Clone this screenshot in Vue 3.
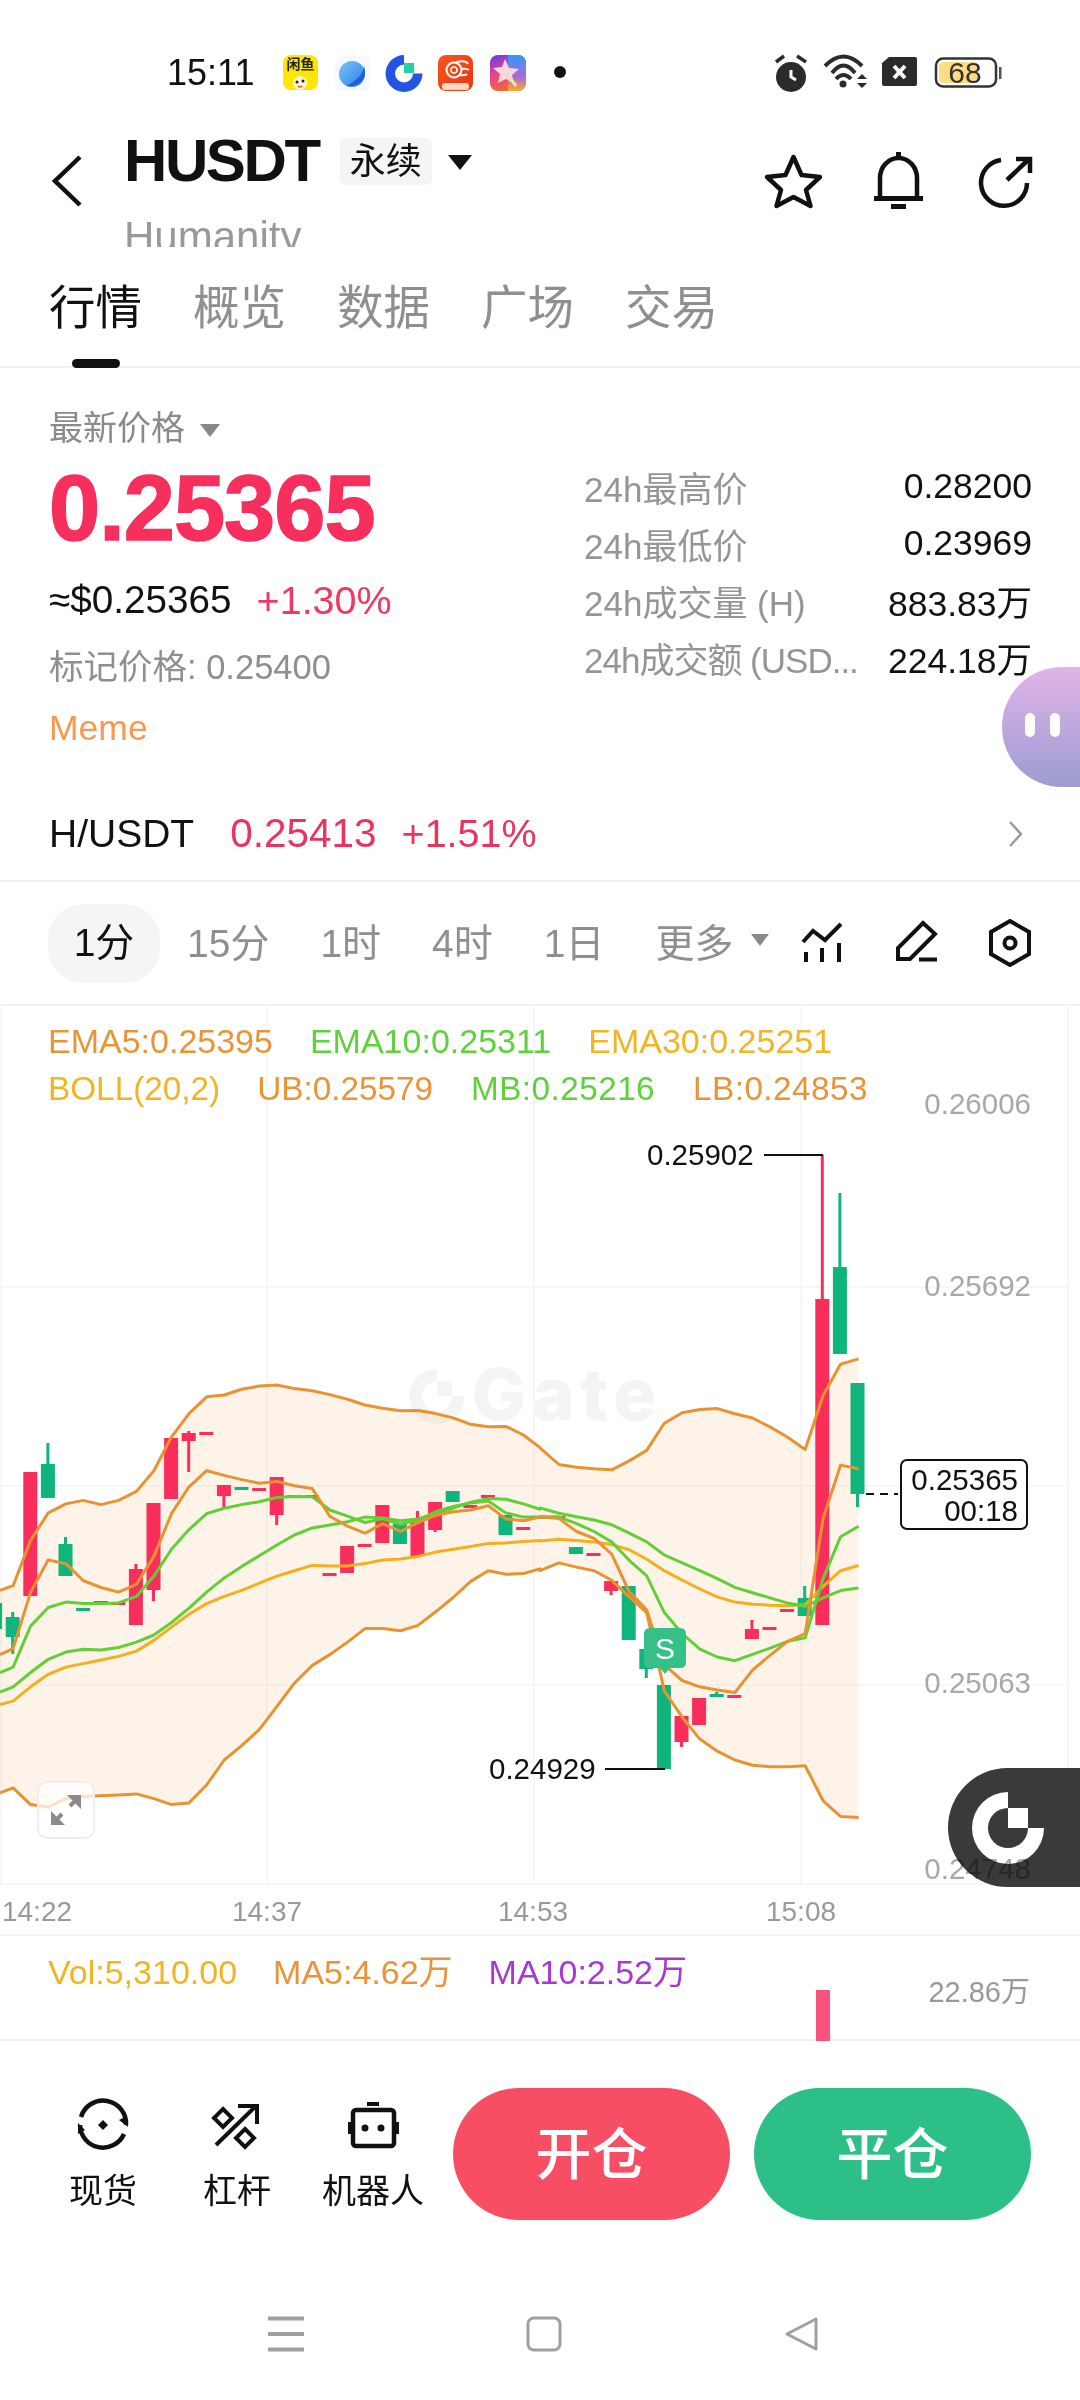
<script setup>
const tabs = ['行情', '概览', '数据', '广场', '交易']
const stats = [
  ['24h最高价', '0.28200'],
  ['24h最低价', '0.23969'],
  ['24h成交量 (H)', '883.83万'],
  ['24h成交额 (USD...', '224.18万'],
]
const periods = ['15分', '1时', '4时', '1日']

const X = (i) => 12.7 + 17.6 * i
const UP = '#f92e5a'
const DN = '#0fb57c'
// [index, colour, wickTop, bodyTop, bodyBottom, wickBottom]
const raw = [
  [-1, DN, 1603, 1603, 1629, 1629], [0, DN, 1612, 1617, 1637, 1654], [1, UP, 1472, 1472, 1596, 1596],
  [2, DN, 1443, 1464, 1498, 1498], [3, DN, 1537, 1544, 1576, 1576], [4, DN, 1608, 1608, 1611, 1611],
  [5, UP, 1601, 1601, 1604, 1604], [6, UP, 1602, 1602, 1605, 1605], [7, UP, 1564, 1569, 1625, 1625],
  [8, UP, 1503, 1503, 1590, 1601], [9, UP, 1438, 1438, 1499, 1499], [10, UP, 1431, 1433, 1441, 1472],
  [11, UP, 1432, 1432, 1435, 1435], [12, UP, 1485, 1485, 1496, 1508], [13, DN, 1487, 1487, 1490, 1490],
  [14, UP, 1488, 1488, 1491, 1491], [15, UP, 1477, 1477, 1515, 1525], [16, UP, 1495, 1495, 1498, 1498],
  [17, UP, 1495, 1495, 1498, 1498], [18, UP, 1573, 1573, 1576, 1576], [19, UP, 1546, 1546, 1573, 1573],
  [20, UP, 1544, 1544, 1547, 1547], [21, UP, 1505, 1505, 1543, 1543], [22, DN, 1524, 1524, 1544, 1544],
  [23, UP, 1511, 1519, 1556, 1556], [24, UP, 1502, 1502, 1530, 1532], [25, DN, 1491, 1491, 1502, 1502],
  [26, UP, 1505, 1505, 1508, 1508], [27, UP, 1495, 1495, 1498, 1498], [28, DN, 1515, 1515, 1535, 1535],
  [29, UP, 1527, 1527, 1530, 1530], [30, DN, 1516, 1516, 1519, 1519], [31, UP, 1516, 1516, 1519, 1519],
  [32, DN, 1547, 1547, 1554, 1554], [33, UP, 1553, 1553, 1556, 1556], [34, UP, 1581, 1581, 1591, 1595],
  [35, DN, 1586, 1586, 1640, 1640], [36, DN, 1649, 1649, 1669, 1678], [37, DN, 1685, 1685, 1769, 1769],
  [38, UP, 1716, 1716, 1742, 1747], [39, UP, 1698, 1698, 1725, 1725], [40, DN, 1692, 1694, 1697, 1697],
  [41, UP, 1695, 1695, 1698, 1698], [42, UP, 1620, 1629, 1639, 1639], [43, UP, 1627, 1627, 1630, 1630],
  [44, UP, 1609, 1609, 1612, 1612], [45, DN, 1586, 1598, 1616, 1616], [46, UP, 1155, 1299, 1625, 1625],
  [47, DN, 1193, 1267, 1354, 1354], [48, DN, 1383, 1383, 1494, 1507],
]
const candles = raw.map(([i, color, wt, bt, bb, wb]) => ({ i, color, x: X(i), wt, bt, bb, wb }))

const a = (p) => p.map(([x, y]) => [x / 2.904, y / 2.8 + 1360])
const b = (p) => p.map(([x, y]) => [x / 2.904 + 540, y / 1.912 + 1100])
const str = (p) => p.map(([x, y]) => `${x.toFixed(1)},${y.toFixed(1)}`).join(' ')

const upper = [...a([[0,645],[38,632],[89,505],[140,428],[191,403],[242,393],[293,405],[344,393],[396,368],[447,310],[498,215],[549,150],[600,103],[651,98],[702,82],[753,73],[804,70],[855,80],[907,86],[958,97],[1009,110],[1060,126],[1111,135],[1163,142],[1214,141],[1265,150],[1316,162],[1367,180],[1418,187],[1469,186],[1520,210],[1568,245]]),
  ...b([[0,665],[55,697],[106,702],[157,705],[208,707],[259,690],[310,670],[361,618],[413,598],[464,592],[515,590],[566,600],[617,608],[668,625],[719,645],[770,668],[822,565],[873,505],[925,495]])]
const lower = [...a([[0,1212],[38,1198],[89,1245],[140,1252],[191,1228],[242,1222],[293,1220],[344,1218],[396,1215],[447,1228],[498,1245],[549,1240],[600,1190],[651,1120],[702,1080],[753,1035],[804,970],[855,905],[907,855],[958,825],[1009,790],[1060,752],[1111,752],[1163,758],[1214,743],[1265,705],[1316,665],[1367,620],[1418,590],[1469,600],[1520,598],[1568,585]]),
  ...b([[0,900],[55,885],[106,893],[157,900],[208,918],[259,950],[310,980],[361,1130],[413,1180],[464,1222],[515,1245],[566,1262],[617,1272],[668,1275],[719,1275],[770,1273],[822,1340],[873,1370],[925,1372]])]
const ema5 = [...a([[0,825],[38,808],[89,650],[140,560],[191,570],[242,618],[293,637],[344,650],[396,628],[447,550],[498,430],[549,355],[600,310],[651,323],[702,335],[753,345],[804,340],[855,352],[907,360],[958,438],[1009,465],[1060,485],[1111,458],[1163,480],[1214,455],[1265,435],[1316,425],[1367,420],[1418,408],[1469,445],[1520,450],[1568,440]]),
  ...b([[0,797],[55,800],[106,825],[157,838],[208,868],[259,940],[310,975],[361,1080],[413,1110],[464,1122],[515,1128],[566,1133],[617,1090],[668,1062],[719,1035],[770,1020],[822,800],[873,698],[925,705]])]
const ema10 = [...a([[0,875],[38,860],[89,745],[140,693],[191,678],[242,682],[293,682],[344,680],[396,662],[447,605],[498,530],[549,475],[600,430],[651,415],[702,405],[753,397],[804,385],[855,382],[907,383],[958,420],[1009,437],[1060,455],[1111,445],[1163,460],[1214,448],[1265,425],[1316,410],[1367,400],[1418,395],[1469,428],[1520,440],[1568,440]]),
  ...b([[0,797],[55,797],[106,810],[157,825],[208,845],[259,880],[310,910],[361,980],[413,1020],[464,1050],[515,1065],[566,1072],[617,1060],[668,1048],[719,1035],[770,1028],[822,915],[873,835],[925,815]])]
const mb = [...a([[0,930],[38,915],[89,875],[140,838],[191,818],[242,810],[293,812],[344,805],[396,790],[447,770],[498,735],[549,695],[600,650],[651,610],[702,578],[753,548],[804,518],[855,490],[907,470],[958,462],[1009,453],[1060,440],[1111,442],[1163,450],[1214,445],[1265,430],[1316,415],[1367,398],[1418,388],[1469,390],[1520,403],[1568,418]]),
  ...b([[0,780],[55,790],[106,797],[157,803],[208,812],[259,828],[310,845],[361,870],[413,885],[464,900],[515,915],[566,932],[617,942],[668,952],[719,962],[770,968],[822,952],[873,938],[925,933]])]
const ema30 = [...a([[0,965],[38,955],[89,915],[140,880],[191,860],[242,850],[293,840],[344,830],[396,815],[447,785],[498,748],[549,712],[600,682],[651,662],[702,645],[753,625],[804,605],[855,590],[907,575],[958,577],[1009,577],[1060,570],[1111,560],[1163,557],[1214,550],[1265,538],[1316,530],[1367,522],[1418,514],[1469,512],[1520,508],[1568,505]]),
  ...b([[0,843],[55,840],[106,842],[157,845],[208,850],[259,860],[310,878],[361,900],[413,918],[464,935],[515,950],[566,960],[617,964],[668,966],[719,967],[770,965],[822,930],[873,900],[925,890]])]

const bandFill = str([...upper, ...[...lower].reverse()])
const series = [
  { p: str(upper), c: '#e8932f' }, { p: str(lower), c: '#e8932f' }, { p: str(ema30), c: '#f2b01e' },
  { p: str(mb), c: '#62cf35' }, { p: str(ema10), c: '#62cf35' }, { p: str(ema5), c: '#e8932f' },
]
const hGrid = [1287, 1486, 1685, 1884]
const vGrid = [1, 267, 534, 801, 1068]
const yLabels = [['0.26006', 1104], ['0.25692', 1286], ['0.25063', 1683]]
const tLabels = [['14:22', 37], ['14:37', 267], ['14:53', 533], ['15:08', 801]]
</script>

<template>
  <div class="page">
    <div class="status">
      <span class="clock">15:11</span>
      <svg class="notify" width="290" height="45" viewBox="280 50 290 45">
        <defs>
          <linearGradient id="planet" x1="0" y1="0" x2="1" y2="1"><stop offset="0" stop-color="#7cc4fb" /><stop offset="1" stop-color="#2a7bea" /></linearGradient>
          <linearGradient id="app5a" x1="0" y1="0" x2="0.4" y2="1"><stop offset="0" stop-color="#5b41ee" /><stop offset="0.5" stop-color="#e8408e" /><stop offset="1" stop-color="#f9662f" /></linearGradient>
          <linearGradient id="app5b" x1="1" y1="0" x2="1" y2="1"><stop offset="0" stop-color="#2a9bf7" /><stop offset="0.6" stop-color="#a76adf" /><stop offset="1" stop-color="#f8ab25" /></linearGradient>
          <linearGradient id="app4" x1="0" y1="0" x2="1" y2="1"><stop offset="0" stop-color="#f8561f" /><stop offset="1" stop-color="#e83511" /></linearGradient>
        </defs>
        <rect x="283" y="55" width="35" height="35" rx="8" fill="#ffe600" />
        <text x="300.5" y="69" class="tiny">闲鱼</text>
        <circle cx="300" cy="83" r="7" fill="#fff6c9" />
        <circle cx="297" cy="82" r="1.5" fill="#222" /><circle cx="303" cy="81" r="1.5" fill="#222" />
        <path d="M298 86 Q300 88 302 86" stroke="#e4572e" stroke-width="1.6" fill="none" />

        <rect x="335" y="56" width="35" height="35" rx="8" fill="#f5f8fc" />
        <circle cx="352" cy="74" r="13" fill="url(#planet)" />
        <path d="M364 66 Q363 78 346 86 Q358 88 364 78 Q366 72 364 66Z" fill="#1f5fcf" />

        <path d="M404 55 A18.5 18.5 0 1 0 422.5 73.5 H413 A9 9 0 1 1 404 64.5Z" fill="#2354e2" />
        <rect x="404" y="63" width="10" height="10" fill="#21d3a2" />

        <rect x="438" y="55" width="35" height="36" rx="8" fill="url(#app4)" />
        <circle cx="454" cy="70" r="7.5" fill="none" stroke="#fff" stroke-width="2" />
        <circle cx="454" cy="70" r="3" fill="none" stroke="#fff" stroke-width="1.5" />
        <path d="M456 62 Q466 60 468 64 M461 69 Q467 68 469 70 M459 75 Q465 76 467 74" stroke="#fff" stroke-width="2" fill="none" />
        <rect x="442" y="83" width="27" height="7" rx="3" fill="#ffd9c6" />

        <rect x="490" y="55" width="36" height="36" rx="8" fill="url(#app5a)" />
        <path d="M508 55 H518 A8 8 0 0 1 526 63 V83 A8 8 0 0 1 518 91 H508Z" fill="url(#app5b)" />
        <path d="M505 59 L509 68 L519 69 L512 75 L514 84 L506 79 L498 83 L500 74 L493 68 L502 67Z" fill="#f7d5d8" />
        <path d="M510 78 L516 86" stroke="#f7e3a0" stroke-width="3" />

        <circle cx="560" cy="72" r="6" fill="#111" />
      </svg>
      <svg class="sys" width="235" height="45" viewBox="770 50 235 45">
        <circle cx="791" cy="77" r="15" fill="#2b2b2b" />
        <path d="M776 62 L784 56 M797 56 L806 62" stroke="#2b2b2b" stroke-width="3.5" />
        <path d="M791 70 V77 L796 80" stroke="#fff" stroke-width="3" fill="none" />
        <path d="M825 66 Q843.5 47 862 66 M832 73 Q843.5 58 855 73 M836 79 Q843.5 71 851 79" stroke="#2b2b2b" stroke-width="4" fill="none" />
        <circle cx="843" cy="84" r="3.5" fill="#2b2b2b" />
        <path d="M862 74 L867 79 H857Z M857 83 H867 L862 88Z" fill="#2b2b2b" />
        <path d="M889 57 H915 Q917 57 917 59 V84 Q917 86 915 86 H884 Q882 86 882 84 V63Z" fill="#2b2b2b" />
        <path d="M894 66 L905 78 M905 66 L894 78" stroke="#fff" stroke-width="4" />
        <rect x="936" y="58.500" width="60" height="28" rx="7" fill="#fff" stroke="#333" stroke-width="2.500" />
        <rect x="939" y="62" width="38" height="21" rx="4" fill="#fddc82" />
        <text x="965" y="83" class="batt">68</text>
        <rect x="999" y="67" width="2.500" height="12" fill="#555" />
      </svg>
    </div>

    <header class="head">
      <svg class="back" width="36" height="60" viewBox="50 150 36 60">
        <path d="M80 157 L55 181 L80 205" fill="none" stroke="#111" stroke-width="4.500" />
      </svg>
      <div class="title">
        <div class="title-row">
          <span class="symbol">HUSDT</span>
          <span class="badge">永续</span>
          <i class="tri tri-black"></i>
        </div>
        <div class="name">Humanity</div>
      </div>
      <svg class="head-icons" width="275" height="65" viewBox="760 150 275 65">
        <path d="M793.500 157 L801.500 175 L820 177 L806 190 L810.500 206 L793.500 197 L776.500 206 L781 190 L767 177 L785.500 175Z" fill="none" stroke="#111" stroke-width="4.500" stroke-linejoin="round" />
        <path d="M880 198 V178 A18.500 20 0 0 1 917 178 V198" fill="none" stroke="#111" stroke-width="4.500" />
        <rect x="874" y="196" width="49" height="5" fill="#111" />
        <rect x="896" y="152" width="5" height="7" fill="#111" />
        <rect x="891" y="204" width="15" height="5" fill="#111" />
        <path d="M1001 160 A23 23 0 1 0 1027 183" fill="none" stroke="#111" stroke-width="4.500" />
        <path d="M1007 180 L1028 160 M1016 159 H1030 V173" fill="none" stroke="#111" stroke-width="4.500" />
      </svg>
    </header>

    <nav class="tabs">
      <span v-for="(t, i) in tabs" :key="t" class="tab" :class="{ on: i === 0 }">{{ t }}</span>
    </nav>

    <section class="market">
      <div class="left">
        <div class="latest">最新价格 <i class="tri tri-gray"></i></div>
        <div class="price">0.25365</div>
        <div class="usd"><span class="usd-v">≈$0.25365</span><span class="usd-c">+1.30%</span></div>
        <div class="mark">标记价格: 0.25400</div>
        <div class="meme">Meme</div>
      </div>
      <div class="right">
        <div v-for="s in stats" :key="s[0]" class="stat">
          <span class="stat-k">{{ s[0] }}</span>
          <span class="stat-v">{{ s[1] }}</span>
        </div>
      </div>
    </section>

    <div class="spot">
      <span class="spot-n">H/USDT</span>
      <span class="spot-p">0.25413</span>
      <span class="spot-c">+1.51%</span>
      <svg class="chev" width="16" height="28" viewBox="0 0 16 28"><path d="M2 2 L13 14 L2 26" fill="none" stroke="#999" stroke-width="2.500" /></svg>
    </div>

    <div class="periods">
      <span class="pill">1分</span>
      <span v-for="p in periods" :key="p" class="period">{{ p }}</span>
      <span class="period more">更多<i class="tri tri-small"></i></span>
      <div class="tools">
        <svg width="44" height="44" viewBox="800 920 44 44">
          <path d="M803 942 L813 931 L825 940 L841 924" fill="none" stroke="#111" stroke-width="4" />
          <path d="M806 952 V962 M822 948 V962 M839 943 V962" stroke="#111" stroke-width="4" />
        </svg>
        <svg width="44" height="44" viewBox="895 920 44 44">
          <path d="M923 923 L935 934 L910 959 H898 V948Z" fill="none" stroke="#111" stroke-width="4" />
          <path d="M919 959.500 H937" stroke="#111" stroke-width="4" />
        </svg>
        <svg width="44" height="48" viewBox="988 919 44 48">
          <path d="M1010 921 L1029 932 V954 L1010 965 L991 954 V932Z" fill="none" stroke="#111" stroke-width="4" />
          <circle cx="1010" cy="943" r="5.500" fill="none" stroke="#111" stroke-width="4" />
        </svg>
      </div>
    </div>

    <section class="chart">
      <svg class="canvas" width="1080" height="930" viewBox="0 1004 1080 930">
        <path d="M0 1005 H1080" stroke="#f2f2f2" stroke-width="2" />
        <path v-for="y in hGrid" :key="'h' + y" :d="`M0 ${y} H1068`" stroke="#f4f4f4" stroke-width="1.500" />
        <path v-for="x in vGrid" :key="'v' + x" :d="`M${x} 1006 V1884`" stroke="#f5f5f5" stroke-width="1.500" />

        <g class="wm">
          <path d="M437 1369 A27.500 27.500 0 1 0 464.500 1396.500 H452 A15 15 0 1 1 437 1381.500Z" />
          <rect x="437" y="1381" width="15" height="15" />
          <text x="472" y="1420">Gate</text>
        </g>

        <polygon :points="bandFill" fill="#f9a04a" fill-opacity="0.12" />
        <g v-for="c in candles" :key="c.i">
          <rect :x="c.x - 1.500" :y="c.wt" width="3" :height="c.wb - c.wt" :fill="c.color" />
          <rect :x="c.x - 7" :y="c.bt" width="14" :height="c.bb - c.bt" :fill="c.color" />
        </g>
        <polyline v-for="(s, i) in series" :key="i" :points="s.p" fill="none" :stroke="s.c" stroke-width="3" stroke-linejoin="round" />

        <path d="M644 1634 Q644 1628 650 1628 H680 Q686 1628 686 1634 V1662 Q686 1668 680 1668 H670 L665 1674 L660 1668 H650 Q644 1668 644 1662Z" fill="#35c088" />
        <text x="665" y="1659" class="s-mark">S</text>

        <text x="647" y="1165" class="lbl">0.25902</text>
        <path d="M764 1155 H823" stroke="#111" stroke-width="2" />
        <text x="489" y="1779" class="lbl">0.24929</text>
        <path d="M605 1769 H665" stroke="#111" stroke-width="2" />

        <path d="M866 1494 H898" stroke="#111" stroke-width="2" stroke-dasharray="8 6" />
        <rect x="901" y="1460" width="126" height="69" rx="6" fill="#fff" stroke="#111" stroke-width="2" />
        <text x="1018" y="1490" class="lbl end">0.25365</text>
        <text x="1018" y="1521" class="lbl end">00:18</text>

        <text v-for="l in yLabels" :key="l[0]" x="1031" :y="l[1] + 10" class="axis">{{ l[0] }}</text>
        <text v-for="l in tLabels" :key="l[0]" :x="l[1]" y="1921" class="time">{{ l[0] }}</text>
      </svg>

      <div class="legend">
        <div class="lg-row">
          <span class="c-o">EMA5:0.25395</span><span class="c-g">EMA10:0.25311</span><span class="c-y">EMA30:0.25251</span>
        </div>
        <div class="lg-row lg-2">
          <span class="c-y">BOLL(20,2)</span><span class="c-o">UB:0.25579</span><span class="c-g wide">MB:0.25216</span><span class="c-o wide">LB:0.24853</span>
        </div>
      </div>

      <button class="expand" type="button" aria-label="expand">
        <svg width="34" height="34" viewBox="0 0 34 34">
          <path d="M13 21 L4 30 M21 13 L30 4" stroke="#8a8a8a" stroke-width="4" />
          <path d="M2 18 V32 H16Z M18 2 H32 V16Z" fill="#8a8a8a" />
        </svg>
      </button>
    </section>

    <section class="vol">
      <div class="vol-legend">
        <span class="c-y">Vol:5,310.00</span><span class="c-o">MA5:4.62万</span><span class="c-p">MA10:2.52万</span>
      </div>
      <span class="vol-max">22.86万</span>
      <i class="vol-bar"></i>
    </section>

    <div class="actions">
      <div class="act">
        <svg width="56" height="48" viewBox="75 2099 56 48">
          <path d="M81 2115 A23 23 0 0 1 126 2123" fill="none" stroke="#111" stroke-width="4.500" />
          <path d="M124 2132 A23 23 0 0 1 80 2123" fill="none" stroke="#111" stroke-width="4.500" />
          <path d="M119 2118 L128 2125 L127 2114Z M85 2128 L78 2121 L78 2132Z" fill="#111" />
          <path d="M103 2118 L108 2123 L103 2128 L98 2123Z" fill="#111" />
        </svg>
        <span>现货</span>
      </div>
      <div class="act">
        <svg width="56" height="48" viewBox="209 2099 56 48">
          <path d="M223 2107 L232 2116 L223 2125 L214 2116Z M245 2127 L254 2136 L245 2145 L236 2136Z" fill="none" stroke="#111" stroke-width="4" />
          <path d="M216 2143 L256 2104 M238 2104 H257 V2122" fill="none" stroke="#111" stroke-width="4" />
        </svg>
        <span>杠杆</span>
      </div>
      <div class="act">
        <svg width="56" height="48" viewBox="345 2099 56 48">
          <rect x="353" y="2108" width="41" height="36" rx="3" fill="none" stroke="#111" stroke-width="4.500" />
          <rect x="367" y="2100" width="12" height="4" fill="#111" />
          <rect x="348" y="2120" width="3" height="12" fill="#111" />
          <rect x="396" y="2120" width="3" height="12" fill="#111" />
          <circle cx="365" cy="2126" r="3.500" fill="#111" />
          <circle cx="381" cy="2126" r="3.500" fill="#111" />
        </svg>
        <span>机器人</span>
      </div>
      <div class="btn open">开仓</div>
      <div class="btn close">平仓</div>
    </div>

    <div class="sysnav">
      <svg width="36" height="36" viewBox="0 0 36 36"><path d="M0 2.500 H36 M0 18 H36 M0 33.500 H36" stroke="#a0a0a0" stroke-width="4" /></svg>
      <svg width="36" height="36" viewBox="0 0 36 36"><rect x="2" y="2" width="32" height="32" rx="6" fill="none" stroke="#a0a0a0" stroke-width="3" /></svg>
      <svg width="36" height="36" viewBox="0 0 36 36"><path d="M32 3 V33 L3 18Z" fill="none" stroke="#a0a0a0" stroke-width="3" stroke-linejoin="round" /></svg>
    </div>

    <div class="blob"><i></i><i></i></div>
    <div class="gate-fab">
      <svg width="132" height="119" viewBox="948 1768 132 119">
        <path d="M1008 1792 A36 36 0 1 0 1044 1828 H1028 A20 20 0 1 1 1008 1808Z" fill="#fff" />
        <rect x="1008" y="1808" width="20" height="20" fill="#fff" />
      </svg>
    </div>
    <span class="axis-over">0.24748</span>
  </div>
</template>

<style>
html, body { margin: 0; background: #fff; }
</style>

<style scoped>
.page {
  position: relative;
  width: 1080px;
  height: 2400px;
  overflow: hidden;
  background: #fff;
  color: #111;
  font-family: "Liberation Sans", "Noto Sans CJK SC", sans-serif;
}
i { display: block; font-style: normal; }

.status { display: flex; align-items: center; box-sizing: border-box; height: 112px; padding: 33px 75px 0 167px; }
.clock { font-size: 36px; line-height: 45px; width: 89px; margin-right: 24px; }
.notify, .sys { display: block; }
.sys { margin-left: auto; }
.tiny { font-size: 14px; font-weight: 700; text-anchor: middle; fill: #222; }
.batt { font-size: 30px; text-anchor: middle; fill: #333; }

.head { display: flex; align-items: flex-start; height: 135px; overflow: hidden; }
.back { margin: 38px 38px 0 50px; flex: none; }
.title { padding-top: 14px; }
.title-row { display: flex; align-items: center; height: 70px; }
.symbol { font-size: 60px; font-weight: 700; letter-spacing: -2.400px; line-height: 70px; }
.badge { margin-left: 21px; width: 92px; height: 47px; line-height: 47px; text-align: center; font-size: 36px; background: #f5f5f5; border-radius: 6px; }
.name { margin-top: 16px; font-size: 42px; line-height: 50px; color: #999; }
.head-icons { margin: 38px 45px 0 auto; flex: none; }

.tri { width: 0; height: 0; border-style: solid; border-color: transparent; }
.title-row .tri { margin: 2px 0 0 16px; }
.tri-black { border-width: 15px 12px 0; border-top-color: #111; }
.tri-gray { display: inline-block; border-width: 13px 10.500px 0; border-top-color: #888; margin-left: 6px; vertical-align: 3px; }
.tri-small { display: inline-block; border-width: 12px 9px 0; border-top-color: #888; margin-left: 17px; vertical-align: 6px; }

.tabs { display: flex; gap: 51px; box-sizing: border-box; height: 121px; padding: 2px 0 0 49px; align-items: center; border-bottom: 2px solid #f2f2f2; }
.tab { position: relative; font-size: 46.500px; line-height: 60px; color: #8f8f8f; }
.tab.on { color: #111; }
.tab.on::after { content: ""; position: absolute; left: 23px; bottom: -30px; width: 48px; height: 9px; border-radius: 5px; background: #111; }

.market { display: flex; height: 402px; }
.left { padding: 40px 0 0 49px; }
.latest { font-size: 34px; line-height: 40px; color: #8a8a8a; }
.price { margin-top: 10px; font-size: 92px; line-height: 100px; font-weight: 700; color: #f72f5c; letter-spacing: -1px; -webkit-text-stroke: 1.500px #f72f5c; }
.usd { margin-top: 20px; display: flex; align-items: center; line-height: 44px; }
.usd-v { font-size: 38.700px; }
.usd-c { margin-left: 25px; font-size: 39.500px; color: #ee3a62; }
.mark { margin-top: 23px; font-size: 34.500px; line-height: 44px; color: #8f8f8f; }
.meme { margin-top: 17px; font-size: 35.500px; line-height: 44px; color: #f59a4f; }
.right { margin-left: auto; width: 448px; margin-right: 48px; padding-top: 90px; }
.stat { display: flex; justify-content: space-between; align-items: center; height: 57px; font-size: 35px; }
.stat-k { color: #959595; }
.stat-v { color: #111; font-size: 35.500px; }
.stat:last-child .stat-k { letter-spacing: -1px; }

.spot { display: flex; align-items: center; box-sizing: border-box; height: 112px; padding: 17px 56px 0 49px; border-bottom: 2px solid #f2f2f2; }
.spot-n { font-size: 39px; }
.spot-p { margin-left: 36px; font-size: 40.500px; color: #e8345f; }
.spot-c { margin-left: 25px; font-size: 39.500px; color: #e8345f; }
.chev { margin-left: auto; }

.periods { display: flex; align-items: center; height: 122px; padding-left: 48px; gap: 51px; }
.pill { width: 112px; height: 79px; line-height: 77px; margin-right: -24px; text-align: center; background: #f5f5f5; border-radius: 36px; font-size: 39px; }
.period { font-size: 39px; color: #8f8f8f; white-space: nowrap; margin-bottom: 7px; }
.more { display: flex; align-items: center; margin-left: 0; }
.more .tri-small { vertical-align: 0; }
.tools { position: absolute; left: 800px; top: 920px; display: flex; }
.tools svg { display: block; }
.tools svg:nth-child(2) { margin-left: 51px; }
.tools svg:nth-child(3) { margin: -1px 0 0 49px; }

.chart { position: relative; height: 930px; }
.canvas { position: absolute; left: 0; top: 0; display: block; }
.wm { fill: #f3f5f5; }
.wm text { font-family: Inter, "Liberation Sans", sans-serif; font-size: 72px; font-weight: 800; letter-spacing: 6px; }
.lbl { font-size: 29.500px; fill: #111; }
.end { text-anchor: end; }
.s-mark { font-size: 30px; fill: #fff; text-anchor: middle; }
.axis { font-size: 29.500px; fill: #a8a8a8; text-anchor: end; }
.time { font-size: 28px; fill: #999; text-anchor: middle; }

.legend { position: relative; padding: 14px 0 0 48px; font-size: 34px; line-height: 47px; }
.lg-row { display: flex; gap: 37px; white-space: nowrap; }
.lg-2 { font-size: 33.300px; }
.wide { letter-spacing: 0.450px; margin-left: 1px; }
.c-o { color: #e8953a; }
.c-g { color: #5fd13c; }
.c-y { color: #f0b522; }
.c-p { color: #a838d0; }

.expand { position: absolute; left: 37px; top: 777px; box-sizing: border-box; width: 58px; height: 58px; padding: 0; display: flex; align-items: center; justify-content: center; background: rgba(255, 255, 255, 0.72); border: 2px solid #eeeeee; border-radius: 10px; }

.vol { position: relative; box-sizing: border-box; height: 107px; border-top: 2px solid #f4f4f4; border-bottom: 2px solid #f0f0f0; }
.vol-legend { display: flex; gap: 36px; padding: 14px 0 0 48px; font-size: 34px; line-height: 44px; white-space: nowrap; }
.vol-max { position: absolute; right: 50px; top: 36px; font-size: 29px; line-height: 40px; color: #999; }
.vol-bar { position: absolute; left: 816px; top: 54px; width: 14px; height: 51px; background: #f9527a; }

.actions { display: flex; align-items: flex-start; padding: 47px 49px 0 36px; }
.act { display: flex; flex-direction: column; align-items: center; width: 134px; padding-top: 13px; font-size: 34px; line-height: 44px; }
.act:nth-child(3) { width: 138px; margin-right: 11px; }
.act svg { display: block; margin-bottom: 20px; overflow: visible; }
.btn { width: 277px; height: 132px; line-height: 134px; border-radius: 66px; text-align: center; color: #fff; font-size: 56px; font-weight: 500; }
.open { background: #f84e64; }
.close { background: #2cc088; margin-left: 24px; }

.sysnav { display: flex; gap: 222px; padding: 96px 0 0 268px; }
.sysnav svg { display: block; }

.blob { position: absolute; left: 1002px; top: 667px; box-sizing: border-box; width: 78px; height: 120px; display: flex; gap: 15px; padding: 46px 0 0 23px; border-radius: 60px 0 0 60px; background: linear-gradient(180deg, #e0b4e6 0%, #bba6dc 55%, #9c9dd0 100%); }
.blob i { width: 10px; height: 24px; background: #fff; border-radius: 5px; }
.gate-fab { position: absolute; left: 948px; top: 1768px; width: 132px; height: 119px; background: #3a3a3a; border-radius: 60px 0 0 60px; }
.gate-fab svg { display: block; }
.axis-over { position: absolute; right: 49px; top: 1852px; font-size: 29.500px; line-height: 34px; color: #a8a8a8; mix-blend-mode: multiply; }
</style>
